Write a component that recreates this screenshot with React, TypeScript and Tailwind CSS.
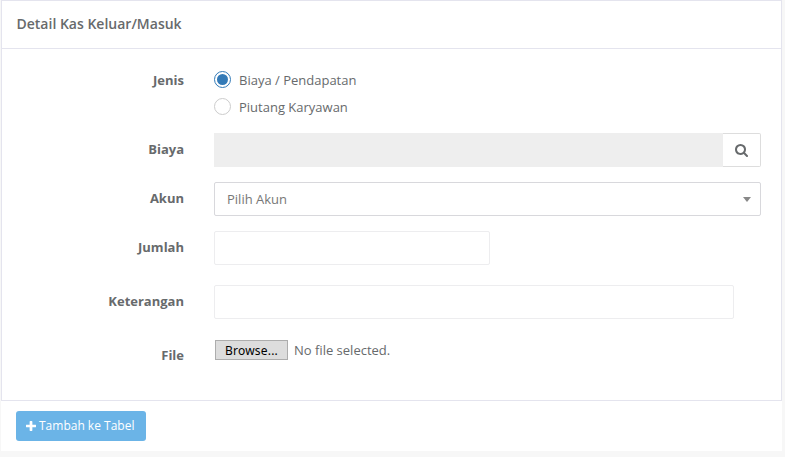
import type { ReactNode } from "react";

function SearchIcon() {
  return (
    <svg width="13" height="13" viewBox="0 128 1664 1664" fill="currentColor" aria-hidden="true">
      <path d="M1152 832q0-185-131.5-316.5t-316.5-131.5-316.5 131.5-131.5 316.5 131.5 316.5 316.5 131.5 316.5-131.5 131.5-316.5zm512 832q0 52-38 90t-90 38q-54 0-90-38l-343-342q-179 124-399 124-143 0-273.5-55.5t-225-150-150-225-55.5-273.5 55.5-273.5 150-225 225-150 273.5-55.5 273.5 55.5 225 150 150 225 55.5 273.5q0 220-124 399l343 343q37 37 37 90z" />
    </svg>
  );
}

function PlusIcon() {
  return (
    <svg width="10" height="10" viewBox="0 128 1408 1408" fill="currentColor" aria-hidden="true">
      <path d="M1408 736v192q0 40-28 68t-68 28h-416v416q0 40-28 68t-68 28h-192q-40 0-68-28t-28-68v-416h-416q-40 0-68-28t-28-68v-192q0-40 28-68t68-28h416v-416q0-40 28-68t68-28h192q40 0 68 28t28 68v416h416q40 0 68 28t28 68z" />
    </svg>
  );
}

function Row({ label, className, labelClass, children }: { label: string; className: string; labelClass: string; children: ReactNode }) {
  return (
    <div className={`flex items-start ${className}`}>
      <label className={`w-[182px] shrink-0 text-right font-bold leading-[18px] ${labelClass}`}>{label}</label>
      <div className="ml-[30px] min-w-0 flex-1">{children}</div>
    </div>
  );
}

function Radio({ label, checked }: { label: string; checked?: boolean }) {
  return (
    <div className="flex h-[27px] items-start">
      <svg width="17" height="17" viewBox="0 0 17 17" className="shrink-0" role="radio" aria-checked={!!checked}>
        <circle cx="8.5" cy="8.5" r="8" fill="#fff" stroke={checked ? "#337ab7" : "#cccccc"} />
        {checked && <circle cx="8.5" cy="8.5" r="5.5" fill="#337ab7" />}
      </svg>
      <span className="ml-2 leading-[18px]">{label}</span>
    </div>
  );
}

export default function App() {
  return (
    <div className="h-[457px] w-[785px] bg-[#f7f7f7] pl-px font-['Open_Sans','Noto_Sans',sans-serif] text-[13px] text-[#676a6c]">
      <section className="w-[781px] bg-white">
        <div className="flex h-[401px] flex-col border border-[#e4e4ee]">
          <header className="flex h-12 shrink-0 items-start border-b border-[#e4e4ee] pl-[14.5px] pt-[12.5px]">
            <h5 className="text-[14px] font-semibold leading-5">Detail Kas Keluar/Masuk</h5>
          </header>
          <div className="pr-5 pt-[22px]">
            <Row label="Jenis" className="h-[62px]" labelClass="">
              <Radio label="Biaya / Pendapatan" checked />
              <Radio label="Piutang Karyawan" />
            </Row>
            <Row label="Biaya" className="h-[49px]" labelClass="pt-[7px]">
              <div className="flex h-[34px]">
                <div className="flex-1 bg-[#eeeeee]" />
                <button className="flex w-[38px] items-center justify-center rounded-r-[2px] border border-l-0 border-[#dddddd] bg-white" aria-label="Cari">
                  <SearchIcon />
                </button>
              </div>
            </Row>
            <Row label="Akun" className="h-[49px]" labelClass="pt-[7px]">
              <div className="flex h-[34px] items-center justify-between rounded-[2px] border border-[#d8d8dc] pl-3 pr-[9px] text-[#777777]">
                <span className="pt-px">Pilih Akun</span>
                <span className="border-x-4 border-t-[5px] border-x-transparent border-t-[#888888]" />
              </div>
            </Row>
            <Row label="Jumlah" className="h-[54px]" labelClass="pt-[7px]">
              <input className="block h-[34px] w-[276px] rounded-[2px] border border-[#ededef] bg-white px-3" />
            </Row>
            <Row label="Keterangan" className="h-[54px]" labelClass="pt-[7px]">
              <input className="block h-[34px] w-[520px] rounded-[2px] border border-[#ededef] bg-white px-3" />
            </Row>
            <Row label="File" className="" labelClass="pt-[7px]">
              <div className="flex items-center pl-px pt-px">
                <button className="h-5 w-[73px] border border-[#adadad] bg-[#dddddd] pt-px font-['Noto_Sans',sans-serif] text-[12px] leading-[17px] tracking-[0.2px] text-black">Browse...</button>
                <span className="ml-[6px] leading-5">No file selected.</span>
              </div>
            </Row>
          </div>
        </div>
        <footer className="h-[50px] pl-[15px] pt-[10px]">
          <button className="flex h-[30px] w-[130px] items-center gap-[3px] rounded-[3px] bg-[#6bb4e7] pl-[10px] text-[12px] text-white">
            <PlusIcon />
            <span>Tambah ke Tabel</span>
          </button>
        </footer>
      </section>
    </div>
  );
}
